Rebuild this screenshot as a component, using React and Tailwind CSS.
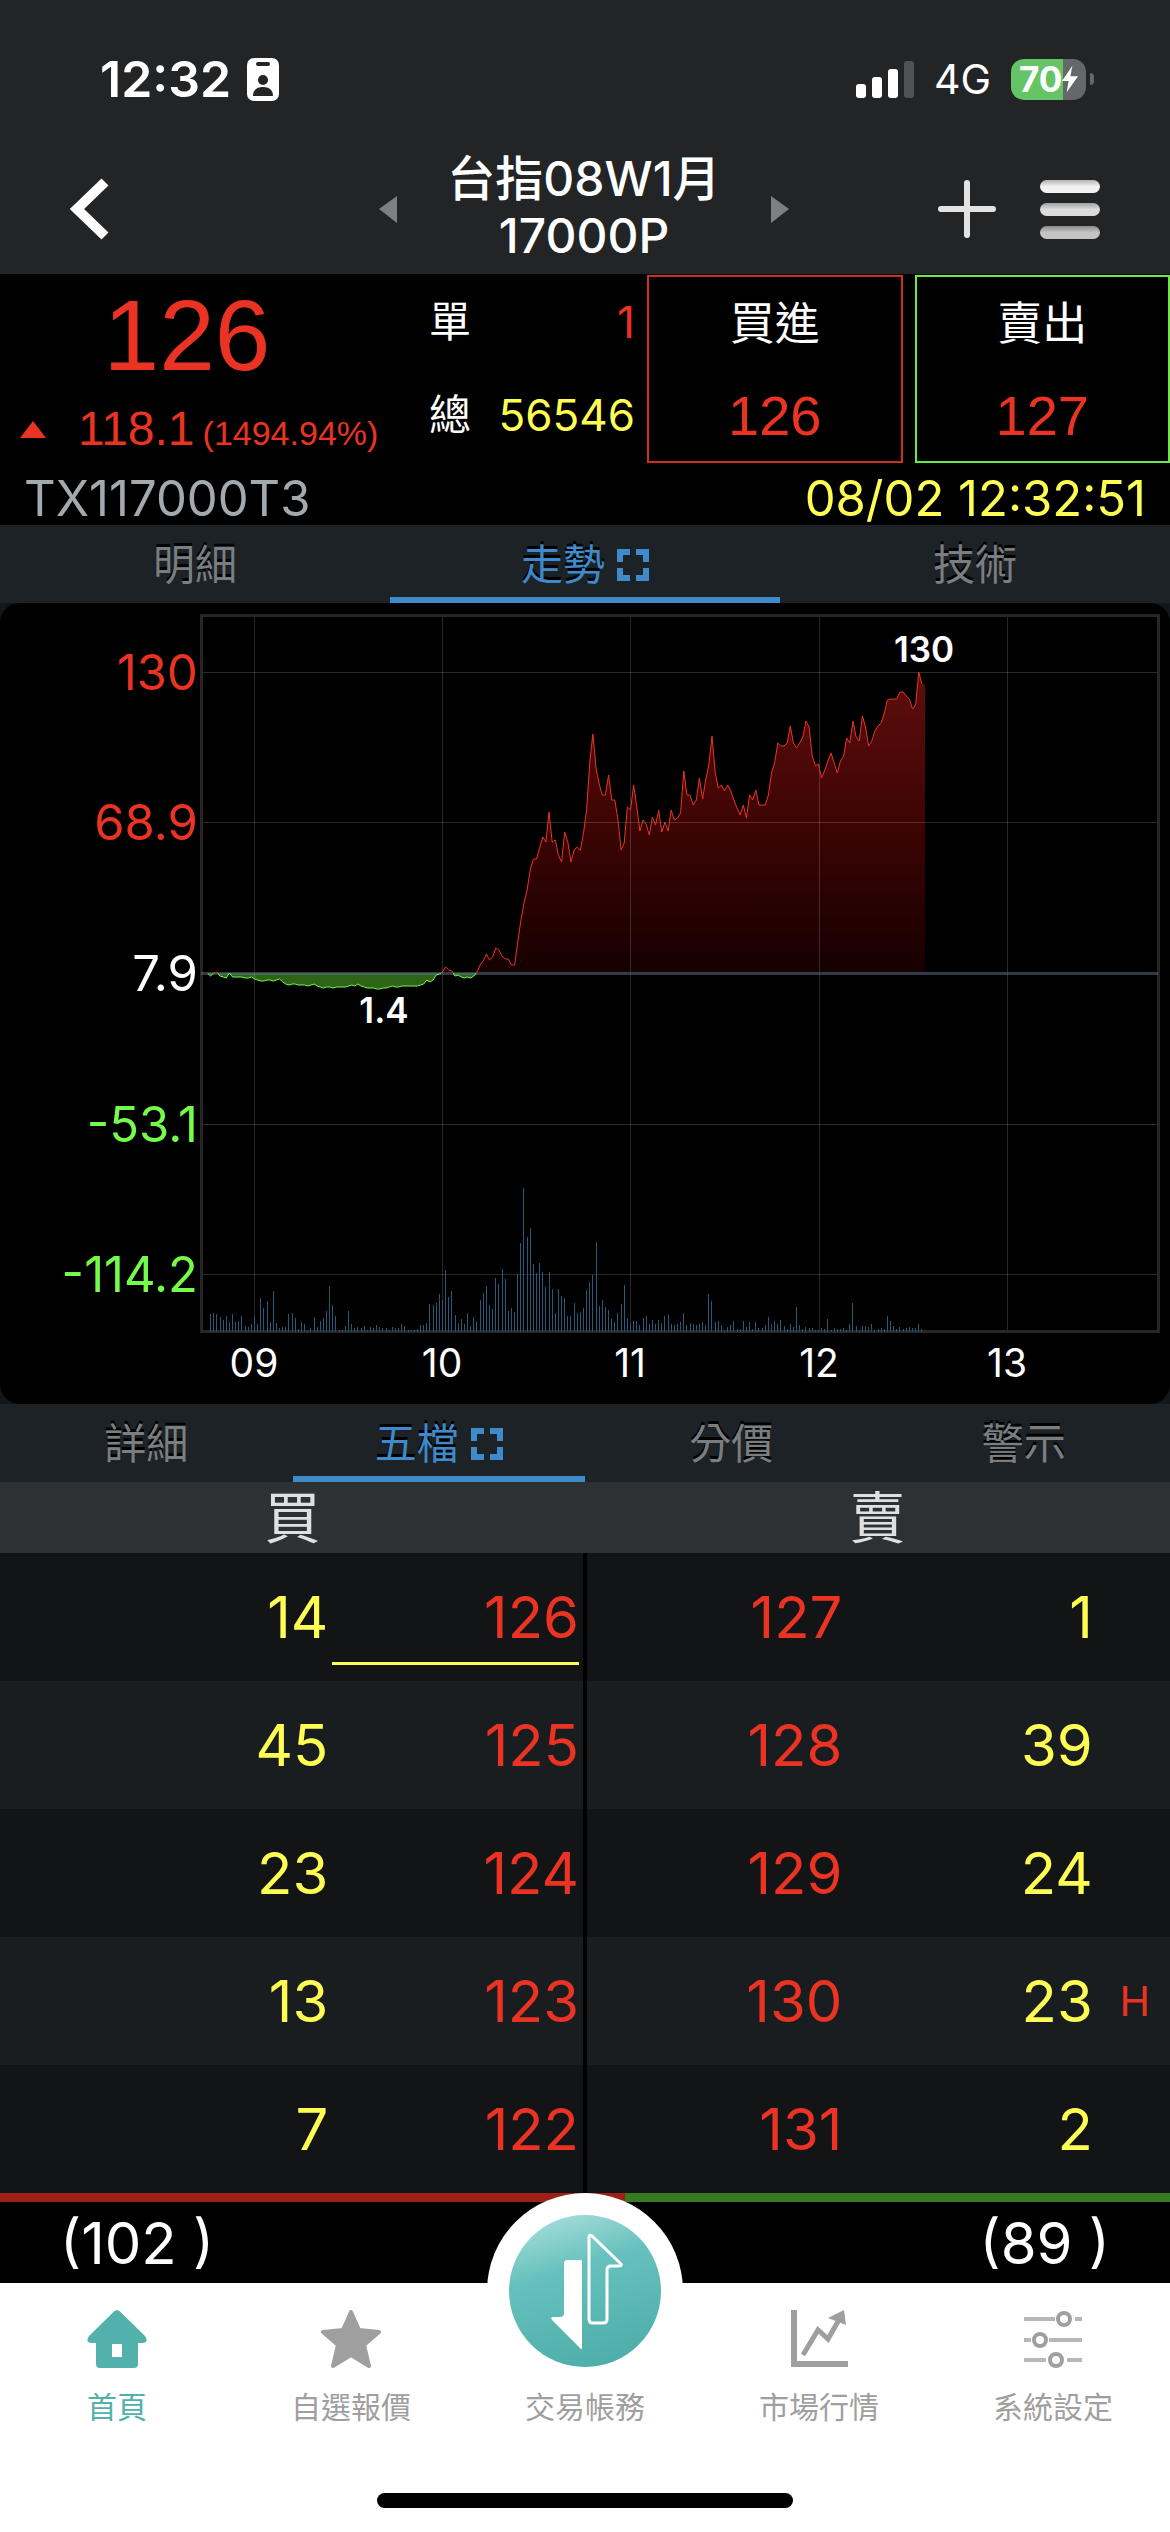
import { useState } from "react";

// price line, pixels above the reference price, one value per minute from 08:45
const PRICE = [
  0, -3, 0, 1, -3, -4, -5, 0, -4, -4, -4, -4, -5, -5, -4, -6, -7, -8, -8, -7,
  -7, -8, -7, -6, -9, -11, -12, -11, -11, -12, -12, -12, -13, -12, -11, -13,
  -14, -15, -14, -14, -15, -14, -14, -14, -14, -13, -12, -13, -11, -13, -14,
  -15, -15, -15, -16, -16, -15, -15, -14, -13, -14, -14, -13, -13, -13, -13,
  -13, -13, -12, -11, -7, -9, -7, -2, -1, 1, 6, 3, 2, -3, -2, -4, -5, -4, -5,
  -3, 1, 8, 12, 19, 13, 16, 25, 23, 17, 14, 14, 8, 8, 31, 52, 70, 83, 103, 114,
  114, 125, 136, 131, 161, 131, 133, 118, 111, 141, 131, 111, 123, 126, 123,
  140, 163, 211, 239, 205, 189, 178, 178, 198, 173, 173, 153, 123, 130, 166,
  163, 188, 166, 142, 153, 149, 138, 156, 148, 163, 141, 151, 142, 163, 153,
  155, 160, 202, 178, 178, 168, 173, 195, 174, 193, 208, 237, 201, 185, 188,
  182, 188, 182, 173, 165, 158, 168, 155, 178, 173, 183, 168, 168, 168, 178,
  200, 210, 230, 227, 227, 230, 247, 230, 225, 230, 236, 252, 246, 217, 207,
  209, 195, 203, 212, 220, 210, 200, 212, 217, 235, 230, 252, 236, 232, 257,
  246, 227, 232, 242, 247, 250, 260, 273, 274, 274, 274, 281, 281, 277, 274,
  264, 268, 301, 289,
];

const VOLUME = [
  18, 19, 18, 15, 12, 16, 10, 18, 10, 11, 16, 6, 5, 8, 15, 8, 34, 24, 31, 10,
  41, 9, 4, 5, 5, 18, 19, 14, 3, 10, 8, 2, 4, 15, 5, 11, 14, 21, 46, 27, 16, 2,
  2, 6, 21, 8, 4, 5, 4, 6, 2, 5, 4, 7, 5, 4, 4, 2, 5, 4, 4, 8, 6, 2, 2, 2, 3, 7,
  7, 9, 28, 27, 29, 38, 32, 62, 35, 41, 17, 9, 13, 8, 19, 6, 15, 11, 32, 39, 46,
  27, 23, 54, 48, 63, 53, 21, 24, 20, 58, 89, 144, 95, 104, 68, 59, 69, 60, 45,
  60, 43, 19, 43, 36, 34, 16, 16, 29, 19, 20, 24, 42, 50, 57, 90, 26, 32, 25,
  22, 13, 10, 19, 28, 47, 14, 9, 11, 11, 7, 14, 16, 8, 12, 8, 12, 9, 16, 17, 8,
  7, 8, 10, 19, 7, 9, 8, 7, 8, 10, 7, 38, 31, 10, 11, 7, 2, 5, 7, 11, 3, 3, 11,
  5, 10, 3, 10, 4, 4, 7, 15, 8, 11, 8, 12, 6, 3, 8, 5, 25, 7, 3, 5, 4, 4, 2, 2,
  4, 3, 13, 2, 4, 3, 3, 4, 2, 8, 29, 6, 2, 6, 6, 5, 8, 2, 3, 4, 3, 16, 11, 6, 3,
  5, 3, 4, 5, 4, 4, 8, 3,
];

const LEVELS = [
  { label: "130", y: 69, color: "#eb3323" },
  { label: "68.9", y: 219, color: "#eb3323" },
  { label: "7.9", y: 370, color: "#ffffff" },
  { label: "-53.1", y: 521, color: "#75fb4c" },
  { label: "-114.2", y: 671, color: "#75fb4c" },
];

const HOURS = [
  { label: "09", x: 254 },
  { label: "10", x: 442 },
  { label: "11", x: 630 },
  { label: "12", x: 819 },
  { label: "13", x: 1007 },
];

const BOOK = [
  { bidQty: 14, bid: 126, ask: 127, askQty: 1, last: true },
  { bidQty: 45, bid: 125, ask: 128, askQty: 39 },
  { bidQty: 23, bid: 124, ask: 129, askQty: 24 },
  { bidQty: 13, bid: 123, ask: 130, askQty: 23, mark: "H" },
  { bidQty: 7, bid: 122, ask: 131, askQty: 2 },
];

const minuteX = (m) => 207.5 + (m * 188) / 60;

const points = PRICE.map((h, m) => `${minuteX(m).toFixed(1)},${370 - h}`).join(" ");
const area = `${minuteX(0)},370 ${points} 925,81 925,370`;

const ExpandIcon = () => (
  <svg viewBox="0 0 32 32" className="w-8 h-8" fill="none" stroke="currentColor" strokeWidth="6">
    <path d="M3 13V3h10M19 3h10v10M29 19v10H19M13 29H3V19" />
  </svg>
);

const Tab = ({ title, active, onClick }) => (
  <button
    role="tab"
    aria-selected={active}
    onClick={onClick}
    className={`flex-1 h-full pt-2 flex items-center justify-center gap-3 text-[42px] leading-none border-b-[6px] cursor-pointer [text-shadow:0_-3px_0_#000] ${
      active ? "text-[#3f8acb] border-[#3f8acb]" : "text-[#7b7e80] border-transparent"
    }`}>
    <span>{title}</span>
    {active && <ExpandIcon />}
  </button>
);

const Tabs = ({ items, initial }) => {
  const [current, setCurrent] = useState(initial);
  return (
    <div role="tablist" className="flex h-[78px] bg-[#1d2226]">
      {items.map((title) => (
        <Tab key={title} title={title} active={title === current} onClick={() => setCurrent(title)} />
      ))}
    </div>
  );
};

const StatusBar = () => (
  <div className="flex items-center justify-between h-[150px] pt-2 pl-[100px] pr-[76px]">
    <div className="flex items-center gap-4">
      <span className="text-[50px] leading-none font-semibold">12:32</span>
      <svg viewBox="0 0 32 43" className="w-8 h-[43px]">
        <rect width="32" height="43" rx="7" fill="#fff" />
        <rect x="9" y="4" width="14" height="4" rx="2" fill="#222426" />
        <circle cx="16" cy="22" r="5" fill="#222426" />
        <path d="M6 38c0-6 4-9 10-9s10 3 10 9z" fill="#222426" />
      </svg>
    </div>
    <div className="flex items-center gap-5">
      <svg viewBox="0 0 58 38" className="w-[58px] h-[38px]" fill="#fff">
        <rect x="0" y="24" width="10" height="14" rx="3" />
        <rect x="16" y="17" width="10" height="21" rx="3" />
        <rect x="32" y="9" width="10" height="29" rx="3" />
        <rect x="48" y="1" width="10" height="37" rx="3" fill="#505254" />
      </svg>
      <span className="text-[41px] leading-none">4G</span>
      <div className="flex items-center gap-1">
        <div className="flex items-center h-[41px] w-[75px] pl-2 rounded-[13px] bg-linear-to-r from-[#65c466] from-70% to-[#666769] to-70%">
          <span className="text-[35px] leading-none font-bold">70</span>
          <svg viewBox="0 0 17 28" className="w-4 h-7" fill="#fff">
            <path d="M11 0 0 16h7L5 28 17 11H9z" />
          </svg>
        </div>
        <div className="w-1 h-3 rounded-r-full bg-[#666769]" />
      </div>
    </div>
  </div>
);

const TitleBar = () => (
  <div className="grid grid-cols-[1fr_auto_1fr] items-center h-[124px] pl-[68px] pr-[70px] pb-[10px]">
    <button aria-label="返回" className="justify-self-start cursor-pointer">
      <svg viewBox="0 0 42 62" className="w-[42px] h-[62px]" fill="none" stroke="#fff" strokeWidth="10">
        <path d="M37 4 9 31l28 27" />
      </svg>
    </button>
    <div className="flex items-center gap-11">
      <button aria-label="上一檔" className="cursor-pointer">
        <svg viewBox="0 0 18 27" className="w-[18px] h-[27px]" fill="#7b8081">
          <path d="M18 0v27L0 13z" />
        </svg>
      </button>
      <h1 className="w-[286px] pb-1 whitespace-nowrap text-center text-[48px] leading-[57px] font-medium">
        台指08W1月
        <br />
        17000P
      </h1>
      <button aria-label="下一檔" className="cursor-pointer">
        <svg viewBox="0 0 18 27" className="w-[18px] h-[27px]" fill="#7b8081">
          <path d="M0 0v27l18-14z" />
        </svg>
      </button>
    </div>
    <div className="flex items-center gap-11 justify-self-end">
      <button aria-label="加入自選" className="cursor-pointer">
        <svg viewBox="0 0 58 58" className="w-[58px] h-[58px]" stroke="#e2e2e2" strokeWidth="6" strokeLinecap="round">
          <path d="M29 3v52M3 29h52" />
        </svg>
      </button>
      <button aria-label="選單" className="flex flex-col gap-[10px] cursor-pointer">
        <span className="w-[60px] h-[13px] rounded-full bg-linear-to-b from-[#b4b4b5] to-[#f2f2f2] to-50%" />
        <span className="w-[60px] h-[13px] rounded-full bg-linear-to-b from-[#a0a1a2] to-[#dcdcdc] to-50%" />
        <span className="w-[60px] h-[13px] rounded-full bg-linear-to-b from-[#8b8c8d] to-[#c4c4c4] to-50%" />
      </button>
    </div>
  </div>
);

const Quote = () => (
  <section className="bg-black">
    <div className="flex h-[189px] pt-px">
      <div className="w-[374px] flex flex-col items-center text-[#eb3323] font-['Liberation_Sans',sans-serif]">
        <div className="pt-[10px] text-[100px] leading-[100px]">126</div>
        <div className="mt-5 w-full flex items-baseline pl-5 whitespace-nowrap">
          <svg viewBox="0 0 26 17" className="w-[26px] h-[17px] shrink-0 self-center" fill="#eb3323">
            <path d="M13 0l13 17H0z" />
          </svg>
          <span className="ml-8 text-[48px] leading-none">118.1</span>
          <span className="ml-2 text-[34px] leading-none">(1494.94%)</span>
        </div>
      </div>
      <dl className="w-[273px] pl-[55px] pr-3 text-[44px]">
        <div className="flex justify-between items-center h-[93px]">
          <dt className="text-[42px]">單</dt>
          <dd className="text-[#eb3323]">1</dd>
        </div>
        <div className="flex justify-between items-center h-[93px]">
          <dt className="text-[42px]">總</dt>
          <dd className="text-[#fdfd54]">56546</dd>
        </div>
      </dl>
      <div className="flex-1 flex gap-3">
        <button className="flex-1 flex flex-col border-2 border-[#cf2e20] cursor-pointer">
          <span className="h-[93px] w-full leading-[93px] text-[45px]">買進</span>
          <span className="h-[92px] w-full leading-[92px] text-[56px] text-[#eb3323] font-['Liberation_Sans',sans-serif]">126</span>
        </button>
        <button className="flex-1 flex flex-col border-2 border-[#6ae845] cursor-pointer">
          <span className="h-[93px] w-full leading-[93px] text-[45px]">賣出</span>
          <span className="h-[92px] w-full leading-[92px] text-[56px] text-[#eb3323] font-['Liberation_Sans',sans-serif]">127</span>
        </button>
      </div>
    </div>
    <div className="flex justify-between items-center h-[62px] pt-2 pl-6 pr-6 text-[49px] leading-none">
      <span className="text-[#a3a9ad]">TX117000T3</span>
      <time className="text-[#fdfd54]">08/02 12:32:51</time>
    </div>
  </section>
);

const Chart = () => (
  <section className="bg-[#13171a]">
    <svg viewBox="0 0 1170 801" className="block w-full rounded-[20px] bg-black" role="img" aria-label="走勢圖">
      <defs>
        <linearGradient id="rise" x1="0" y1="69" x2="0" y2="370" gradientUnits="userSpaceOnUse">
          <stop offset="0" stopColor="#5e0f0d" />
          <stop offset="0.5" stopColor="#3e0404" />
          <stop offset="1" stopColor="#160000" />
        </linearGradient>
        <clipPath id="above">
          <rect x="200" y="12" width="960" height="358" />
        </clipPath>
        <clipPath id="below">
          <rect x="200" y="370" width="960" height="359" />
        </clipPath>
      </defs>

      <polygon points={area} fill="url(#rise)" clipPath="url(#above)" />
      <polygon points={area} fill="#2d6417" clipPath="url(#below)" />

      {/* grid */}
      <g stroke="#fff" strokeOpacity="0.16">
        {HOURS.map(({ x }) => (
          <path key={x} d={`M${x + 0.5} 12V729`} />
        ))}
        {LEVELS.filter(({ y }) => y !== 370).map(({ y }) => (
          <path key={y} d={`M201 ${y + 0.5}H1158`} />
        ))}
      </g>
      <rect x="201.5" y="12.5" width="957" height="716" fill="none" stroke="#262626" strokeWidth="3" />

      {VOLUME.map((h, i) => (
        <rect key={i} x={Math.round(minuteX(i + 1) - 0.5)} y={729 - h} width="1" height={h} fill="#265a7a" />
      ))}

      <rect x="201" y="369" width="957" height="3" fill="#5a788f" fillOpacity="0.5" />
      <polyline points={points} fill="none" stroke="#eb3323" clipPath="url(#above)" />
      <polyline points={points} fill="none" stroke="#75fb4c" clipPath="url(#below)" />

      <g fontSize="49" textAnchor="end">
        {LEVELS.map(({ label, y, color }) => (
          <text key={label} x="198" y={y + 18} fill={color}>
            {label}
          </text>
        ))}
      </g>
      <g fontSize="39" fill="#fff" textAnchor="middle">
        {HOURS.map(({ label, x }) => (
          <text key={label} x={x} y="774">
            {label}
          </text>
        ))}
      </g>
      <g fontSize="35" fontWeight="600" fill="#fff" textAnchor="middle">
        <text x="384" y="420">1.4</text>
        <text x="924" y="59">130</text>
      </g>
    </svg>
  </section>
);

const OrderBook = () => {
  const bidTotal = BOOK.reduce((sum, row) => sum + row.bidQty, 0);
  const askTotal = BOOK.reduce((sum, row) => sum + row.askQty, 0);
  return (
    <section className="bg-black">
      <table className="w-full table-fixed border-collapse">
        <colgroup>
          <col className="w-[28.4%]" />
          <col className="w-[21.6%]" />
          <col className="w-[22%]" />
          <col className="w-[21.4%]" />
          <col />
        </colgroup>
        <thead>
          <tr className="h-[71px] bg-[#2d3133] text-[56px] leading-none text-[#e0e0e0]">
            <th colSpan={2} className="p-0 font-normal">買</th>
            <th colSpan={3} className="p-0 font-normal">賣</th>
          </tr>
        </thead>
        <tbody>
          {BOOK.map((row) => (
            <tr
              key={row.bid}
              className="h-32 bg-[#131415] even:bg-[#191d1f] text-right text-[58px] leading-none text-[#fdfd54]">
              <td className="p-0 pr-1">{row.bidQty}</td>
              <td className="p-0 relative border-r-4 border-black text-[#eb3323]">
                <span className="pr-1">{row.bid}</span>
                {row.last && <span className="absolute left-0 right-1 bottom-4 h-[3px] bg-[#fdfd54]" />}
              </td>
              <td className="p-0 text-[#eb3323]">{row.ask}</td>
              <td className="p-0">{row.askQty}</td>
              <td className="p-0 pr-5 text-[41px] text-[#eb3323]">{row.mark}</td>
            </tr>
          ))}
        </tbody>
      </table>
      <div className="flex h-[9px] bg-[#367b22]">
        <div className="bg-[#9d2117]" style={{ width: `${(bidTotal / (bidTotal + askTotal)) * 100}%` }} />
      </div>
      <div className="flex justify-between items-center h-[81px] px-[60px] text-[58px] leading-none">
        <span>({bidTotal} )</span>
        <span>({askTotal} )</span>
      </div>
    </section>
  );
};

const HomeIcon = () => (
  <svg viewBox="0 0 60 60" className="w-[60px] h-[60px]" fill="currentColor">
    <path
      fillRule="evenodd"
      d="M27 2.500Q30 0 33 2.500L58 27q4 6-2 7h-5v21q0 4-4 4H13q-4 0-4-4V34H4q-6-1-2-7zM25 35v13h10V35z"
    />
  </svg>
);

const StarIcon = () => (
  <svg viewBox="0 0 60 60" className="w-[60px] h-[60px]" fill="currentColor" stroke="currentColor" strokeWidth="4" strokeLinejoin="round">
    <path d="M30 3l8 18 20 2-15 13 5 21-18-11-18 11 5-21L2 23l20-2z" />
  </svg>
);

const MarketIcon = () => (
  <svg viewBox="0 0 60 60" className="w-[60px] h-[60px]" fill="none" stroke="currentColor">
    <path d="M5 1v54h54" strokeWidth="6" />
    <path d="M14 46l15-25 10 9 12-21" strokeWidth="5" />
    <path d="M55 1l2 15L39 9z" fill="currentColor" stroke="none" />
  </svg>
);

const SettingsIcon = () => (
  <svg viewBox="0 0 60 60" className="w-[60px] h-[60px]" fill="none" stroke="currentColor" strokeWidth="4">
    <path strokeOpacity="0.75" d="M1 10h31M52 10h7M1 31h7M26 31h33M1 51h22M44 51h15" />
    <circle cx="41" cy="10" r="6" />
    <circle cx="17" cy="31" r="6" />
    <circle cx="33" cy="51" r="6" />
  </svg>
);

const TradeIcon = () => (
  <svg viewBox="0 0 196 196" className="w-[196px] h-[196px]">
    <defs>
      <linearGradient id="teal" x1="0.3" y1="0" x2="0.6" y2="1">
        <stop offset="0" stopColor="#a3dcd9" />
        <stop offset="0.35" stopColor="#66c1bd" />
        <stop offset="1" stopColor="#4eaea9" />
      </linearGradient>
    </defs>
    <circle cx="98" cy="98" r="98" fill="#fff" />
    <circle cx="98" cy="98" r="76" fill="url(#teal)" />
    <path d="M95 68v86q0 4-2 1L65 127q-2-3 1-3h8q3-1 3-4V70q0-3 4-3h12q2 0 2 1z" fill="#fff" />
    <path
      d="M102 44v82q0 4 4 4h10q4 0 4-4V77q0-4 4-4h8q4 0 1-3l-28-27q-3-2-3 1z"
      fill="none"
      stroke="#fff"
      strokeWidth="3"
    />
  </svg>
);

const NavItem = ({ title, icon, active }) => (
  <a
    href="#"
    className={`flex-1 flex flex-col items-center text-[30px] ${active ? "text-[#53b1ab]" : "text-[#9f9f9f]"}`}>
    <span className="h-[102px] pt-[26px]">{icon}</span>
    <span className="leading-[44px]">{title}</span>
  </a>
);

const BottomNav = () => (
  <nav className="flex-1 bg-white">
    <div className="flex h-[210px]">
      <NavItem title="首頁" icon={<HomeIcon />} active />
      <NavItem title="自選報價" icon={<StarIcon />} />
      <a href="#" className="relative flex-1 flex flex-col items-center pt-[102px] text-[30px] leading-[44px] text-[#9f9f9f]">
        <span className="absolute -top-[90px]">
          <TradeIcon />
        </span>
        <span className="relative">交易帳務</span>
      </a>
      <NavItem title="市場行情" icon={<MarketIcon />} />
      <NavItem title="系統設定" icon={<SettingsIcon />} />
    </div>
    <div className="mx-auto w-[416px] h-[15px] rounded-full bg-black" />
  </nav>
);

function App() {
  return (
    <div className="min-h-screen flex flex-col bg-black text-white font-['Inter','Noto_Sans_CJK_TC',sans-serif]">
      <header className="bg-[#222426]">
        <StatusBar />
        <TitleBar />
      </header>
      <Quote />
      <Tabs items={["明細", "走勢", "技術"]} initial="走勢" />
      <Chart />
      <Tabs items={["詳細", "五檔", "分價", "警示"]} initial="五檔" />
      <OrderBook />
      <BottomNav />
    </div>
  );
}

export default App;
